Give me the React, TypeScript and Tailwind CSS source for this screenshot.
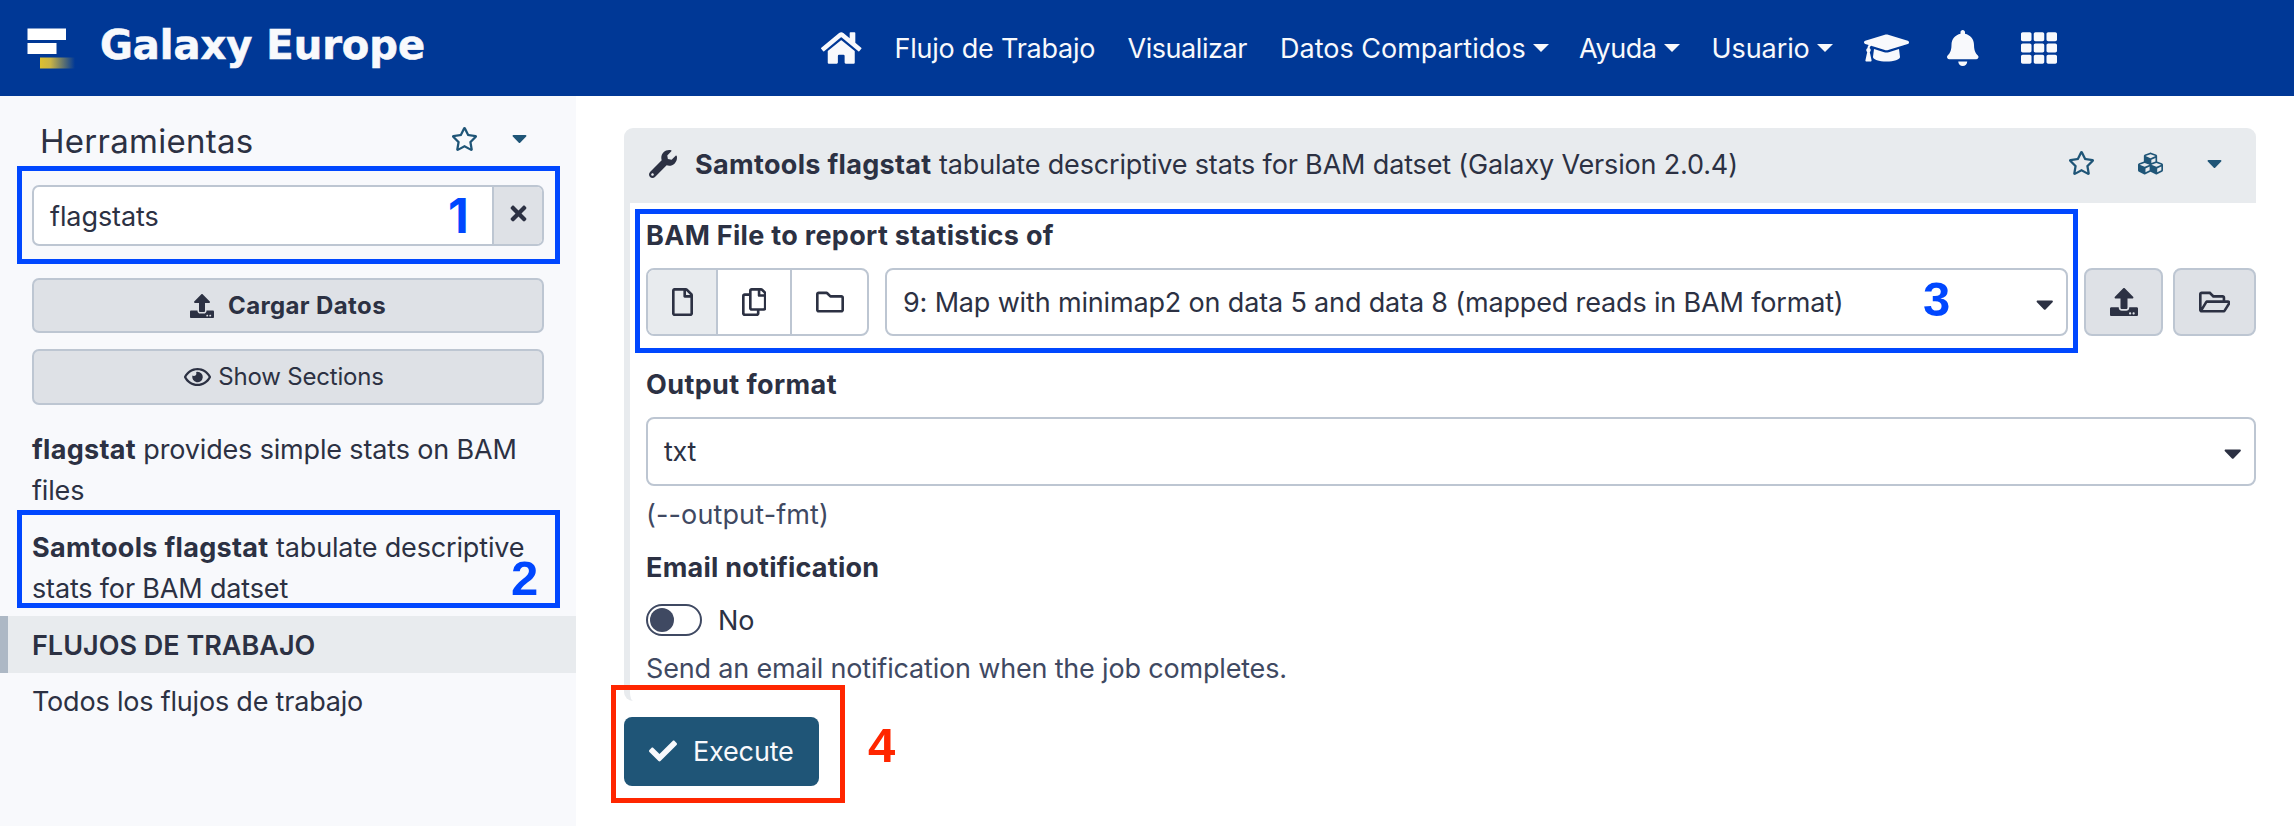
import React from "react";
import {
  FaBell,
  FaCaretDown,
  FaCheck,
  FaCubes,
  FaGraduationCap,
  FaHome,
  FaRegCopy,
  FaRegEye,
  FaRegFile,
  FaRegFolder,
  FaRegFolderOpen,
  FaRegStar,
  FaTh,
  FaTimes,
  FaUpload,
  FaWrench,
} from "react-icons/fa";

function Logo() {
  return (
    <svg className="h-11 w-[50px] shrink-0" viewBox="0 0 50 44">
      <defs>
        <linearGradient id="tail" x1="0" x2="1" y1="0" y2="0">
          <stop offset="0" stopColor="#dcc02f" />
          <stop offset="0.3" stopColor="#c9b445" />
          <stop offset="1" stopColor="#003896" />
        </linearGradient>
      </defs>
      <rect x="1.5" y="2.5" width="38.5" height="11.5" fill="#ffffff" />
      <rect x="1.5" y="17" width="29" height="11" fill="#ffffff" />
      <rect x="14" y="31.5" width="35" height="11" fill="url(#tail)" />
    </svg>
  );
}

function NavCaret() {
  return (
    <svg className="mb-[3px] ml-[7px] h-2 w-4" viewBox="0 0 16 8">
      <path d="M0 0h16L8 8z" fill="currentColor" />
    </svg>
  );
}

function Header() {
  return (
    <header className="flex h-24 shrink-0 items-center bg-[#003896] pl-[26px] text-[#f8f9fc]">
      <Logo />
      <div className="mb-[6px] ml-6 w-[721px] shrink-0 font-['DejaVu_Sans',sans-serif] text-[40px] font-bold leading-[48px] tracking-normal [-webkit-text-stroke:0.6px]">
        Galaxy Europe
      </div>
      <nav className="flex shrink-0 items-center whitespace-nowrap">
        <a className="w-[73.5px]">
          <FaHome className="h-9 w-[40.5px]" />
        </a>
        <a className="w-[233px] pt-0.5 tracking-[-0.24px]">Flujo de Trabajo</a>
        <a className="w-[152.5px] pt-0.5 tracking-[-0.44px]">Visualizar</a>
        <a className="flex w-[299px] items-center pt-0.5 tracking-normal">
          Datos Compartidos
          <NavCaret />
        </a>
        <a className="flex w-[132.5px] items-center pt-0.5 tracking-[-0.4px]">
          Ayuda
          <NavCaret />
        </a>
        <a className="flex w-[152.5px] items-center pt-0.5 tracking-[-0.08px]">
          Usuario
          <NavCaret />
        </a>
        <a className="w-[83px]">
          <FaGraduationCap className="h-9 w-[45px]" />
        </a>
        <a className="w-[74px]">
          <FaBell className="h-9 w-[31.5px]" />
        </a>
        <a>
          <FaTh className="size-9" />
        </a>
      </nav>
    </header>
  );
}

function Sidebar() {
  return (
    <aside className="flex w-[576px] shrink-0 flex-col bg-[#f8f9fc] pt-[25px]">
      <div className="flex h-10 items-center pl-10">
        <h2 className="w-[411px] text-[33px] leading-10 tracking-[0.27px]">Herramientas</h2>
        <FaRegStar className="mb-1 h-6 w-[27px] text-[#1f5577]" />
        <FaCaretDown className="mb-[7px] ml-[33.5px] h-6 w-[15px] text-[#1f5577]" />
      </div>

      <div className="mx-8 mt-6 flex h-[61px] overflow-hidden rounded-[7px] border-2 border-[#bdc6d2] bg-white">
        <div className="flex flex-1 items-center pl-4 pt-0.5 tracking-[-0.08px]">flagstats</div>
        <div className="flex w-[50px] items-center justify-center border-l-2 border-[#bdc6d2] bg-[#dee1e6]">
          <FaTimes className="mb-1 h-[23px] w-[17px]" />
        </div>
      </div>

      <button className="mx-8 mt-8 flex h-[55px] items-center justify-center rounded-[7px] border-2 border-[#bdc6d2] bg-[#dee1e6] text-2xl font-bold tracking-[0.38px]">
        <FaUpload className="mr-[14px] size-6" />
        Cargar Datos
      </button>
      <button className="mx-8 mt-4 flex h-14 items-center justify-center rounded-[7px] border-2 border-[#bdc6d2] bg-[#dee1e6] pr-2 text-2xl tracking-[-0.19px]">
        <FaRegEye className="mb-px mr-[7px] h-6 w-[27px]" />
        Show Sections
      </button>

      <p className="mt-[25px] pl-8 leading-[40.5px]">
        <b className="tracking-[0.3px]">flagstat</b> provides simple stats on BAM
        <br />
        files
      </p>
      <p className="mt-[17px] pl-8 leading-[40.5px]">
        <b className="tracking-[0.32px]">Samtools flagstat</b> tabulate descriptive
        <br />
        stats for BAM datset
      </p>

      <div className="mt-[7px] flex h-[57px] items-center border-l-8 border-[#adb8c5] bg-[#e8ebee] pl-6 pt-0.5 font-semibold tracking-normal">
        FLUJOS DE TRABAJO
      </div>
      <div className="mt-[9px] pl-8 leading-[40.5px] tracking-[-0.2px]">Todos los flujos de trabajo</div>
    </aside>
  );
}

function ToolForm() {
  return (
    <main className="flex flex-1 flex-col items-start bg-white pl-12 pr-[38px] pt-8">
      <div className="flex h-[75px] w-full items-center rounded-t-[9px] bg-[#e8ebee] pb-0.5 pl-[25px] pr-[34px]">
        <FaWrench className="mb-0.5 size-7" />
        <div className="ml-[18px] flex-1 pt-px">
          <b className="tracking-[0.32px]">Samtools flagstat</b> tabulate descriptive stats for BAM datset (Galaxy
          Version 2.0.4)
        </div>
        <FaRegStar className="mb-[3px] h-6 w-[27px] text-[#1f5577]" />
        <FaCubes className="mb-[3px] ml-[43px] size-[25px] text-[#1f5577]" />
        <FaCaretDown className="mb-[3px] ml-11 h-6 w-[15px] text-[#1f5577]" />
      </div>

      <div className="w-full rounded-bl-[9px] border-l-[6px] border-[#e8ebee] pb-[11.5px] pl-4 pt-[13px]">
        <label className="block font-bold leading-[40.5px] tracking-[0.31px]">BAM File to report statistics of</label>
        <div className="mt-[11.5px] flex h-[68px]">
          <div className="flex w-[223px] shrink-0 overflow-hidden rounded-lg border-2 border-[#bdc6d2]">
            <div className="flex w-[70px] items-center justify-center border-r-2 border-[#bdc6d2] bg-[#e8ebee]">
              <FaRegFile className="h-7 w-[21px]" />
            </div>
            <div className="flex w-[74px] items-center justify-center border-r-2 border-[#bdc6d2]">
              <FaRegCopy className="h-7 w-[24.5px]" />
            </div>
            <div className="flex flex-1 items-center justify-center">
              <FaRegFolder className="size-7" />
            </div>
          </div>
          <div className="ml-4 flex flex-1 items-center justify-between rounded-lg border-2 border-[#bdc6d2] pl-4 pr-[13px] pt-0.5">
            9: Map with minimap2 on data 5 and data 8 (mapped reads in BAM format)
            <FaCaretDown className="mt-0.5 h-7 w-[17.5px]" />
          </div>
          <button className="ml-4 flex w-[79px] items-center justify-center rounded-lg border-2 border-[#bdc6d2] bg-[#dee1e6]">
            <FaUpload className="size-7" />
          </button>
          <button className="ml-2.5 flex w-[83px] items-center justify-center rounded-lg border-2 border-[#bdc6d2] bg-[#dee1e6]">
            <FaRegFolderOpen className="h-7 w-[31.5px]" />
          </button>
        </div>

        <label className="mt-[29px] block font-bold leading-[40.5px] tracking-[0.4px]">Output format</label>
        <div className="mt-[11.5px] flex h-[69px] items-center justify-between rounded-lg border-2 border-[#bdc6d2] pl-4 pr-[13px] pt-px">
          <span className="tracking-[-0.3px]">txt</span>
          <FaCaretDown className="mt-0.5 h-7 w-[17.5px]" />
        </div>
        <p className="mt-[9px] leading-[40.5px] tracking-[0.13px] text-[#3f4962]">(--output-fmt)</p>

        <label className="mt-[12.5px] block font-bold leading-[40.5px] tracking-[0.24px]">Email notification</label>
        <div className="mt-[11.5px] flex h-[40.5px] items-center">
          <div className="flex h-8 w-14 items-center rounded-full border-2 border-[#3f4962] pl-0.5">
            <div className="size-6 rounded-full bg-[#3f4962]" />
          </div>
          <span className="ml-4 pt-0.5">No</span>
        </div>
        <p className="mt-2 leading-[40.5px] tracking-[-0.18px] text-[#3f4962]">
          Send an email notification when the job completes.
        </p>
      </div>

      <button className="mt-4 flex h-[69px] w-[195px] items-center rounded-lg bg-[#1f5577] pl-[25px] text-[#f8f9fc]">
        <FaCheck className="size-7" />
        <span className="ml-4 pt-0.5">Execute</span>
      </button>
    </main>
  );
}

/* Numbered step markers drawn over the page */
function Annotations() {
  return (
    <div className="pointer-events-none absolute inset-0 font-['Liberation_Sans',sans-serif] text-[49px] font-bold leading-[49px] tracking-normal text-[#0047ff]">
      <div className="absolute left-[17px] top-[166px] h-[98px] w-[543px] border-[5px] border-[#0047ff]" />
      <div className="absolute left-[448px] top-[191px] font-[Inter,sans-serif] text-[48px]">1</div>
      <div className="absolute left-[17px] top-[510px] h-[98px] w-[543px] border-[5px] border-[#0047ff]" />
      <div className="absolute left-[511px] top-[560px] leading-9">2</div>
      <div className="absolute left-[635px] top-[209px] h-36 w-[1443px] border-[5px] border-[#0047ff]" />
      <div className="absolute left-[1923px] top-[275px]">3</div>
      <div className="absolute left-[611px] top-[685px] h-[118px] w-[234px] border-[5px] border-[#ff2600]" />
      <div className="absolute left-[868px] top-[721px] text-[#ff2600]">4</div>
    </div>
  );
}

export default function App() {
  return (
    <div className="relative flex h-[826px] w-[2294px] flex-col overflow-hidden bg-white font-[Inter,sans-serif] text-[27px] leading-10 tracking-[-0.16px] text-[#2c3143]">
      <Header />
      <div className="flex flex-1">
        <Sidebar />
        <ToolForm />
      </div>
      <Annotations />
    </div>
  );
}
